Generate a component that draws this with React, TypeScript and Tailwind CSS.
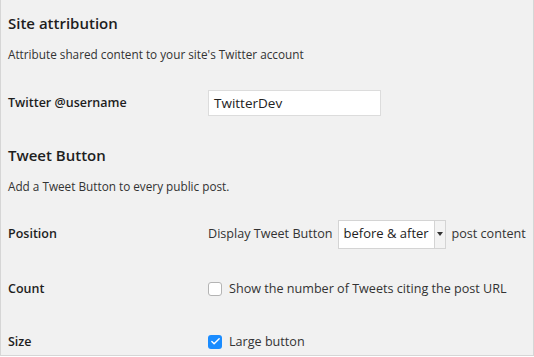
import { Check } from "lucide-react";

const Checkbox = ({ checked }: { checked: boolean }) =>
  checked ? (
    <span className="flex size-[14px] items-center justify-center rounded-[3px] bg-[#1a8cff]">
      <Check className="size-[11px] text-white" strokeWidth={3} />
    </span>
  ) : (
    <span className="size-[14px] rounded-[3px] border border-[#b4b4b4] bg-white" />
  );

const Row = ({ label, h, children }: { label: string; h: string; children: React.ReactNode }) => (
  <div className={`flex items-center ${h}`}>
    <div className="w-[200px] shrink-0 text-[12.5px] font-semibold text-[#1e1e1e]">{label}</div>
    <div className="flex items-center whitespace-nowrap text-[12.6px] text-[#333]">{children}</div>
  </div>
);

export default function App() {
  return (
    <div
      className="h-[356px] w-[534px] overflow-hidden border-b border-l border-r border-[#d6d6d6] bg-[#f1f1f1] pl-[7px]"
      style={{ fontFamily: '"Open Sans", sans-serif' }}
    >
      {/* Site attribution */}
      <h2 className="flex h-[46px] items-center text-[15px] font-semibold text-[#1e1e1e]">Site attribution</h2>
      <p className="flex h-[18px] items-center text-[11.75px] text-[#333]">
        Attribute shared content to your site's Twitter account
      </p>
      <Row label="Twitter @username" h="h-[78px]">
        <div className="flex h-[26px] w-[173px] items-center border border-[#dcdcdc] bg-white px-[5px] text-[13.5px] text-[#222]">
          TwitterDev
        </div>
      </Row>

      {/* Tweet Button */}
      <h2 className="flex h-[26px] items-center text-[15px] font-semibold text-[#1e1e1e]">Tweet Button</h2>
      <p className="flex h-[38px] items-center text-[11.75px] text-[#333]">Add a Tweet Button to every public post.</p>
      <Row label="Position" h="h-[56px]">
        <span>Display Tweet Button</span>
        <div className="ml-[5px] mr-[6px] flex h-[29px] w-[108px] items-stretch border border-[#d4d4d4] bg-white">
          <span className="flex flex-1 items-center pl-[5px] text-[13px] text-[#222]">before &amp; after</span>
          <span className="flex w-[11px] items-center justify-center border-l border-[#d4d4d4] bg-[#f3f3f3]">
            <span className="h-0 w-0 border-x-[3px] border-t-[4px] border-x-transparent border-t-[#333]" />
          </span>
        </div>
        <span>post content</span>
      </Row>
      <Row label="Count" h="h-[54px]">
        <Checkbox checked={false} />
        <span className="ml-[7px]">Show the number of Tweets citing the post URL</span>
      </Row>
      <Row label="Size" h="h-[52px]">
        <Checkbox checked />
        <span className="ml-[7px]">Large button</span>
      </Row>
    </div>
  );
}
